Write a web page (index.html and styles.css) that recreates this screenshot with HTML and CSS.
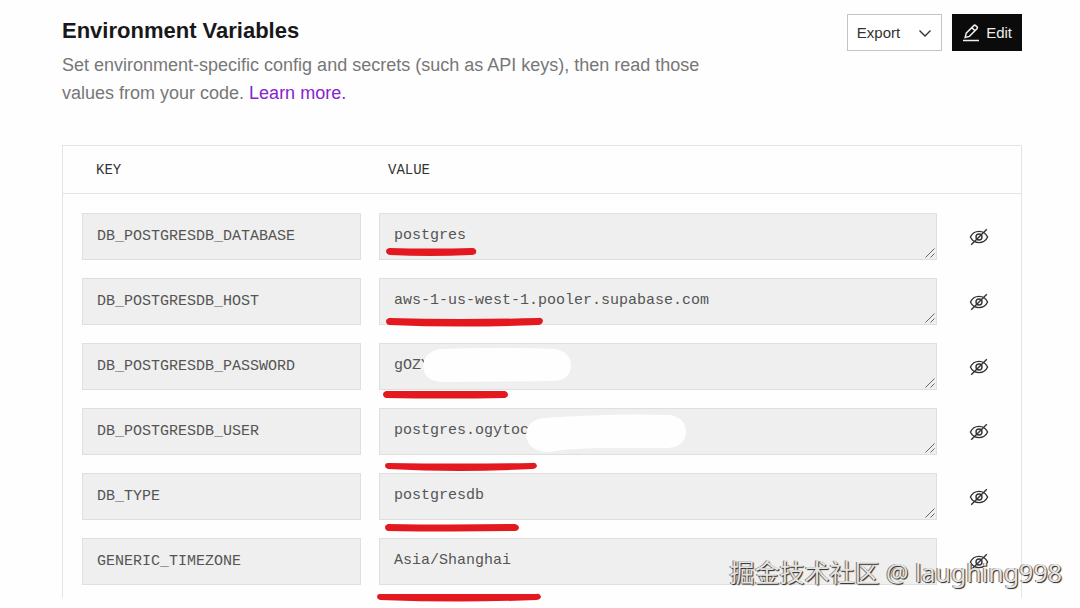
FILE: index.html
```html
<!DOCTYPE html>
<html lang="en">
<head>
<meta charset="utf-8">
<meta name="viewport" content="width=device-width, initial-scale=1">
<title>Environment Variables</title>
<link rel="stylesheet" href="styles.css">
</head>
<body>
<svg class="sprite" aria-hidden="true">
  <symbol id="eye-off" viewBox="0 0 20 20">
    <path d="M1.4 10C3.2 6.200 6.300 4.400 10 4.400s6.800 1.800 8.600 5.600c-1.800 3.800-4.900 5.600-8.600 5.600S3.200 13.800 1.400 10z"/>
    <circle cx="10" cy="10" r="3"/>
    <path d="M2.200 17.800 17.800 2.200"/>
  </symbol>
</svg>
<main class="page">
  <header class="head">
    <div class="intro">
      <h1 class="title">Environment Variables</h1>
      <p class="lead">Set environment-specific config and secrets (such as API keys), then read those values from your code. <a class="link" href="#">Learn more.</a></p>
    </div>
    <div class="actions">
      <button class="btn btn-outline" type="button">Export
        <svg class="chevron" viewBox="0 0 14 14" aria-hidden="true"><path d="M1.500 4.500 7 10l5.500-5.500"/></svg>
      </button>
      <button class="btn btn-solid" type="button">
        <svg class="pen" viewBox="0 0 18 18" aria-hidden="true"><path d="M1 16.400h16M3.200 13.400l1-4.200L11.800 1.600c.6-.6 1.300-.6 1.900 0l1.300 1.300c.6.6.6 1.300 0 1.900l-7.600 7.600zM9.800 3.600l3.200 3.200"/></svg>
        Edit</button>
    </div>
  </header>

  <section class="panel">
    <div class="row row-head"><span>KEY</span><span>VALUE</span></div>
    <div class="rows">
      <div class="row">
        <input class="field" aria-label="Key 1" value="DB_POSTGRESDB_DATABASE" readonly>
        <textarea class="field area" aria-label="Value 1" rows="1" readonly>postgres</textarea>
        <button class="eye" type="button" aria-label="Show value 1"><svg><use href="#eye-off"/></svg></button>
      </div>
      <div class="row">
        <input class="field" aria-label="Key 2" value="DB_POSTGRESDB_HOST" readonly>
        <textarea class="field area" aria-label="Value 2" rows="1" readonly>aws-1-us-west-1.pooler.supabase.com</textarea>
        <button class="eye" type="button" aria-label="Show value 2"><svg><use href="#eye-off"/></svg></button>
      </div>
      <div class="row">
        <input class="field" aria-label="Key 3" value="DB_POSTGRESDB_PASSWORD" readonly>
        <textarea class="field area" aria-label="Value 3" rows="1" readonly>gOZY</textarea>
        <button class="eye" type="button" aria-label="Show value 3"><svg><use href="#eye-off"/></svg></button>
      </div>
      <div class="row">
        <input class="field" aria-label="Key 4" value="DB_POSTGRESDB_USER" readonly>
        <textarea class="field area" aria-label="Value 4" rows="1" readonly>postgres.ogytoc</textarea>
        <button class="eye" type="button" aria-label="Show value 4"><svg><use href="#eye-off"/></svg></button>
      </div>
      <div class="row">
        <input class="field" aria-label="Key 5" value="DB_TYPE" readonly>
        <textarea class="field area" aria-label="Value 5" rows="1" readonly>postgresdb</textarea>
        <button class="eye" type="button" aria-label="Show value 5"><svg><use href="#eye-off"/></svg></button>
      </div>
      <div class="row">
        <input class="field" aria-label="Key 6" value="GENERIC_TIMEZONE" readonly>
        <textarea class="field area" aria-label="Value 6" rows="1" readonly>Asia/Shanghai</textarea>
        <button class="eye" type="button" aria-label="Show value 6"><svg><use href="#eye-off"/></svg></button>
      </div>
    </div>
  </section>

  <svg class="marks" aria-hidden="true">
    <g class="cover">
      <path d="M440 349Q495 347 555 349Q571 352 571 366Q570 380 554 381L442 382Q424 381 423 366Q424 352 440 349z"/>
      <path d="M545 418Q610 413 670 415Q686 418 686 432Q685 447 668 448L595 448Q565 449 548 452Q527 451 526 434Q528 419 545 418z"/>
    </g>
    <g class="ink">
      <path d="M389 248Q430 249 473 248Q477 249 476 253Q475 255 470 255Q430 257 390 255Q386 254 386 251Q386 249 389 248z"/>
      <path d="M389 318Q460 320 538 318Q542 317 543 321Q542 325 538 325Q460 328 389 325Q386 324 386 321Q386 319 389 318z"/>
      <path d="M386 391Q445 391 505 391Q508 392 508 395Q508 397 505 398Q445 399 386 398Q383 397 383 394Q383 392 386 391z"/>
      <path d="M388 463Q460 464 532 463Q536 462 537 466Q536 469 532 469Q460 473 388 469Q385 468 385 466Q385 463 388 463z"/>
      <path d="M388 524Q450 525 515 524Q519 525 519 528Q518 531 515 531Q450 532 388 531Q385 530 385 527Q385 525 388 524z"/>
      <path d="M380 594Q460 594 536 594Q540 593 541 597Q540 600 536 600Q460 603 380 600Q377 599 377 597Q377 594 380 594z"/>
    </g>
  </svg>
  <div class="watermark">掘金技术社区 @ laughing998</div>
</main>
</body>
</html>
```
FILE: styles.css
```css
* { box-sizing: border-box; }

body {
  margin: 0;
  background: #fefefe;
  color: #18181b;
  font-family: "Liberation Sans", Arial, sans-serif;
}

.sprite { display: none; }

.page {
  position: relative;
  padding: 14px 58px 10px 62px;
}

.head {
  display: flex;
  justify-content: space-between;
  align-items: flex-start;
  margin-bottom: 38px;
}

.title {
  margin: 0 0 4px;
  font-size: 22px;
  line-height: 33px;
  font-weight: 700;
}

.lead {
  margin: 0;
  max-width: 660px;
  font-size: 18px;
  line-height: 28px;
  color: #777;
}

.link { color: #8424d2; text-decoration: none; }

.actions { display: flex; gap: 10px; }

.btn {
  display: flex;
  align-items: center;
  height: 37px;
  padding: 0 9px;
  border: 1px solid #c4c4c4;
  font: 15px "Liberation Sans", Arial, sans-serif;
}

.btn svg { fill: none; stroke: currentColor; }

.btn-outline { gap: 18px; background: #fff; color: #333; }
.btn-solid { gap: 6px; background: #0b0b0b; border-color: #0b0b0b; color: #eee; }
.chevron { width: 14px; height: 14px; stroke-width: 1.4; }
.pen { width: 18px; height: 18px; stroke-width: 1.5; }

.panel {
  border: 1px solid #e4e4e4;
  border-bottom: 0;
}

.row {
  display: grid;
  grid-template-columns: 1fr 2fr 48px;
  column-gap: 18px;
  align-items: center;
}

.row-head {
  height: 48px;
  padding: 0 19px 0 33px;
  border-bottom: 1px solid #e4e4e4;
  font: 14px "Liberation Mono", monospace;
  color: #333;
}

.rows {
  display: grid;
  gap: 18px;
  padding: 19px 18px 13px 19px;
}

.field {
  display: block;
  width: 100%;
  height: 47px;
  margin: 0;
  padding: 0 14px;
  border: 1px solid #dfdfdf;
  border-radius: 0;
  background: #efefef;
  color: #555;
  font: 15px/20px "Liberation Mono", monospace;
  outline: 0;
}

.area { padding-top: 12px; overflow: hidden; resize: vertical; }

.area::-webkit-resizer {
  background: url("data:image/svg+xml,%3Csvg xmlns='http://www.w3.org/2000/svg' width='15' height='15'%3E%3Cpath d='M4.500 13.500l9-9M9.500 13.500l4-4' stroke='%23666' fill='none'/%3E%3C/svg%3E") no-repeat right bottom;
}

.eye {
  justify-self: center;
  padding: 0;
  border: 0;
  background: none;
  color: #333;
}

.eye svg {
  display: block;
  width: 20px;
  height: 20px;
  fill: none;
  stroke: currentColor;
  stroke-width: 1.4;
}

.marks {
  position: absolute;
  top: 0;
  left: 0;
  width: 100%;
  height: 100%;
  pointer-events: none;
}

.cover { fill: #fefefe; }
.ink { fill: #e3191f; }

.watermark {
  position: absolute;
  right: 18px;
  bottom: 18px;
  font: 25px/36px "Noto Sans", "Noto Sans CJK SC", sans-serif;
  color: #e4e4e4;
  text-shadow: 1px 1px 1px #222, -1px 0 0 #777;
}
```
